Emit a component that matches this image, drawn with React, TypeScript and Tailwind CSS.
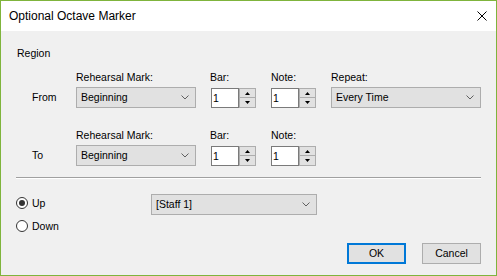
import React from "react";

function Chevron() {
  return (
    <svg width="8" height="5" viewBox="0 0 8 5" className="shrink-0">
      <polyline points="0.5,0.5 4,4 7.5,0.5" fill="none" stroke="#606060" strokeWidth="1" />
    </svg>
  );
}

function Combo({ w, text }: { w: string; text: string }) {
  return (
    <div className={`${w} h-[21px] border border-[#adadad] bg-[#e1e1e1] flex items-center justify-between pl-[4px] pr-[6px]`}>
      <span>{text}</span>
      <Chevron />
    </div>
  );
}

function Spinner() {
  return (
    <div className="w-[45px] h-[20px] mt-[1px] flex">
      <div className="w-[28px] h-full border border-[#7a7a7a] bg-white flex items-center pl-[1px]">1</div>
      <div className="w-[17px] h-full flex flex-col">
        <div className="h-[10px] border border-[#adadad] bg-[#e1e1e1] flex items-center justify-center">
          <svg width="5" height="3" viewBox="0 0 5 3"><polygon points="2.5,0 5,3 0,3" fill="#000" /></svg>
        </div>
        <div className="h-[10px] border border-t-0 border-[#adadad] bg-[#e1e1e1] flex items-center justify-center">
          <svg width="5" height="3" viewBox="0 0 5 3"><polygon points="0,0 5,0 2.5,3" fill="#000" /></svg>
        </div>
      </div>
    </div>
  );
}

function Row({ label, repeat }: { label: string; repeat: boolean }) {
  return (
    <div className="flex">
      <div className="w-[60px] flex flex-col">
        <div className="h-[13px]" />
        <div className="h-[21px] mt-[3px] flex items-center pl-[16px] pb-[1px]">{label}</div>
      </div>
      <div className="w-[120px] flex flex-col">
        <div className="h-[13px]">Rehearsal Mark:</div>
        <div className="mt-[3px]"><Combo w="w-[120px]" text="Beginning" /></div>
      </div>
      <div className="w-[45px] ml-[15px] flex flex-col">
        <div className="h-[13px] -ml-[1px]">Bar:</div>
        <div className="mt-[3px]"><Spinner /></div>
      </div>
      <div className="w-[45px] ml-[15px] flex flex-col">
        <div className="h-[13px]">Note:</div>
        <div className="mt-[3px]"><Spinner /></div>
      </div>
      {repeat && (
        <div className="w-[150px] ml-[15px] flex flex-col">
          <div className="h-[13px]">Repeat:</div>
          <div className="mt-[3px]"><Combo w="w-[150px]" text="Every Time" /></div>
        </div>
      )}
    </div>
  );
}

function Radio({ checked, label }: { checked: boolean; label: string }) {
  return (
    <div className="h-[14px] flex items-center">
      <div className="w-[12px] h-[12px] rounded-full border border-[#333333] bg-white flex items-center justify-center">
        {checked && <div className="w-[6px] h-[6px] rounded-full bg-[#333333]" />}
      </div>
      <span className="ml-[4px]">{label}</span>
    </div>
  );
}

export default function App() {
  return (
    <div
      className="w-[497px] h-[276px] border border-[#7fb43c] bg-[#f0f0f0] flex flex-col text-black"
      style={{ fontFamily: '"Liberation Sans", Arial, sans-serif' }}
    >
      <div className="h-[30px] bg-white flex items-center justify-between pl-[8px] pr-[9px] shrink-0">
        <span className="text-[12px] leading-[14px]">Optional Octave Marker</span>
        <svg width="10" height="10" viewBox="0 0 10 10">
          <line x1="0.5" y1="0.5" x2="9.5" y2="9.5" stroke="#000" strokeWidth="1" />
          <line x1="9.5" y1="0.5" x2="0.5" y2="9.5" stroke="#000" strokeWidth="1" />
        </svg>
      </div>
      <div className="flex-1 flex flex-col px-[15px] text-[10.5px] leading-[13px]">
        <div className="pt-[16px] pl-[1px] h-[29px]">Region</div>
        <div className="mt-[11px]">
          <Row label="From" repeat={true} />
        </div>
        <div className="mt-[21px]">
          <Row label="To" repeat={false} />
        </div>
        <div className="mt-[11px] h-[2px] border-t border-[#a0a0a0] border-b border-b-white" />
        <div className="mt-[15px] flex">
          <div className="w-[135px] flex flex-col pt-[2px]">
            <Radio checked={true} label="Up" />
            <div className="mt-[9px]">
              <Radio checked={false} label="Down" />
            </div>
          </div>
          <Combo w="w-[166px]" text="[Staff 1]" />
        </div>
        <div className="mt-[10px] flex justify-end gap-[16px]">
          <div className="w-[59px] h-[21px] border-2 border-[#0078d7] bg-[#e1e1e1] flex items-center justify-center">OK</div>
          <div className="w-[59px] h-[21px] border border-[#adadad] bg-[#e1e1e1] flex items-center justify-center">Cancel</div>
        </div>
      </div>
    </div>
  );
}
